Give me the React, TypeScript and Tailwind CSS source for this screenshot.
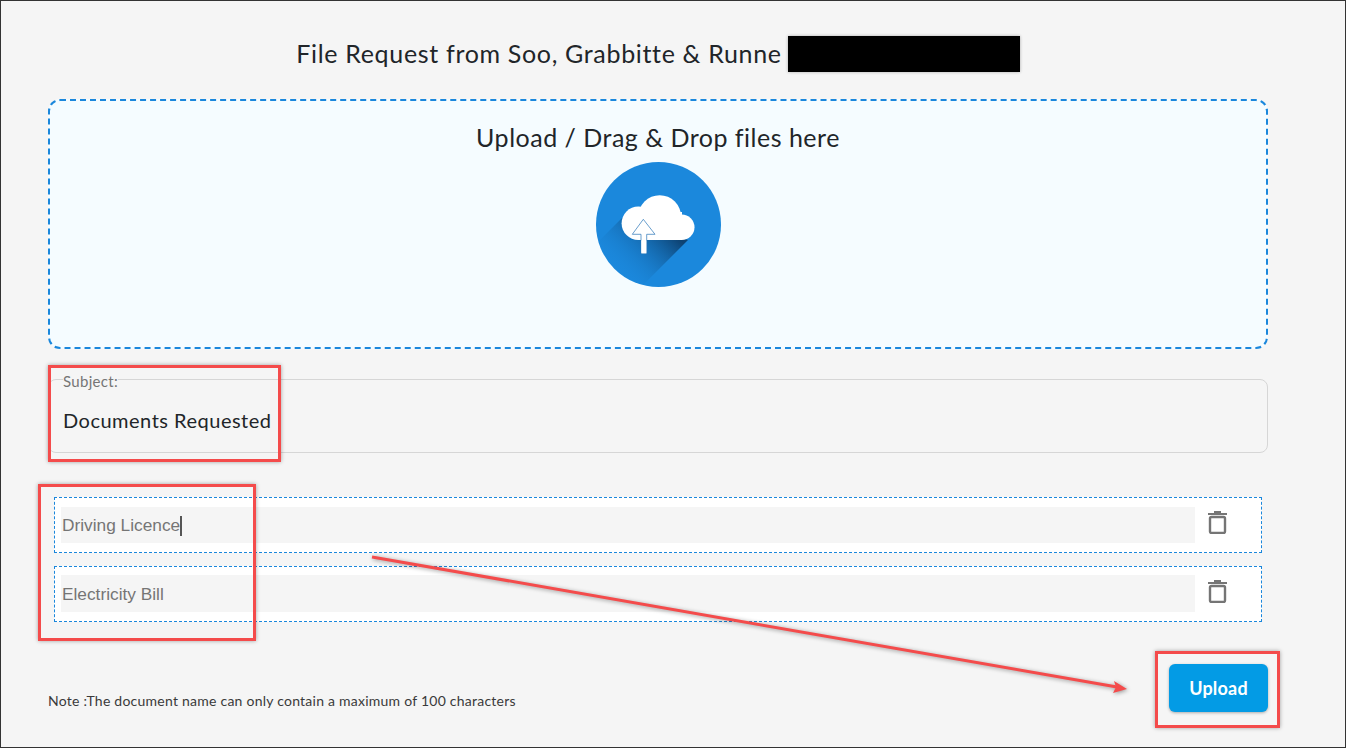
const sans = 'font-["Lato","Noto_Sans",sans-serif]';

function CloudIcon() {
  return (
    <svg width="125" height="125" viewBox="0 0 125 125" className="block">
      <defs>
        <clipPath id="disc">
          <circle cx="62.5" cy="62.5" r="62.5" />
        </clipPath>
        <linearGradient id="fall" gradientUnits="userSpaceOnUse" x1="78" y1="72" x2="30" y2="120">
          <stop offset="0" stopColor="#0d4272" />
          <stop offset="1" stopColor="#1a87dc" stopOpacity="0" />
        </linearGradient>
      </defs>
      <circle cx="62.5" cy="62.5" r="62.5" fill="#1b88dc" />
      <g clipPath="url(#disc)">
        <polygon points="26,56 92,78 40,130 -20,102" fill="url(#fall)" />
      </g>
      <g fill="#fff">
        <circle cx="42.3" cy="61.3" r="16.7" />
        <circle cx="63.7" cy="54.6" r="21.4" />
        <circle cx="85.7" cy="65.2" r="12.8" />
        <rect x="42" y="50" width="44" height="28" />
      </g>
      <path
        d="M47.3 57.3 L36.3 72.3 L45 72.3 L45 91.3 L50.7 91.3 L50.7 72.3 L59 72.3 Z"
        fill="#fff"
        stroke="#2a76b8"
        strokeWidth="0.7"
      />
      <rect x="45.4" y="78.4" width="4.9" height="13" fill="#fff" />
    </svg>
  );
}

function TrashIcon() {
  return (
    <svg width="19" height="23" viewBox="0 0 19 23" className="block">
      <rect x="6" y="0" width="7" height="2" fill="#757575" />
      <rect x="0" y="2" width="19" height="2" fill="#757575" />
      <rect x="2" y="6" width="15" height="16" rx="1.5" fill="none" stroke="#757575" strokeWidth="2.4" />
    </svg>
  );
}

function DocRow({ name, caret, inputClass }: { name: string; caret?: boolean; inputClass: string }) {
  return (
    <div className="flex h-[56px] items-center border border-dashed border-[#1a87dc] bg-white pl-[6px]">
      <div className={`flex w-[1134px] items-center bg-[#f5f5f5] pl-px font-["Liberation_Sans",sans-serif] text-[17.3px] text-[#757575] ${inputClass}`}>
        {name}
        {caret && <span className="h-[20px] w-[1.5px] bg-[#555]" />}
      </div>
      <div className="ml-[13px] -mt-[5px]">
        <TrashIcon />
      </div>
    </div>
  );
}

export default function App() {
  return (
    <div className={`relative h-[748px] w-[1346px] overflow-hidden border border-[#333] bg-[#f5f5f5] ${sans} text-[#212529]`}>
      <div className="px-[47px]">
        {/* header */}
        <div className="flex h-[98px] w-[1220px] items-start justify-center gap-[6px] pt-[35px]">
          <h1 className="-mt-px text-[25px] leading-[36px] font-normal tracking-[0.67px]">File Request from Soo, Grabbitte &amp; Runne</h1>
          <div className="h-[36px] w-[232px] bg-black shadow-[0_0_3px_rgba(0,0,0,0.3)]" />
        </div>

        {/* drop zone */}
        <div className="flex h-[250px] w-[1220px] flex-col items-center rounded-[12px] border-2 border-dashed border-[#1a87dc] bg-[#f5fcff] pt-[18px]">
          <div className="text-[25px] leading-[36px] tracking-[0.5px]">Upload / Drag &amp; Drop files here</div>
          <div className="mt-[7px]">
            <CloudIcon />
          </div>
        </div>

        {/* subject */}
        <fieldset className="mt-[21px] h-[83px] w-[1220px] rounded-[8px] border border-[#d6d6d6] pl-[14px]">
          <legend className="pt-[4px] text-[15px] leading-[14px] tracking-[0.3px] text-[#757575]">Subject:</legend>
          <div className="mt-[17px] text-[20px] leading-[30px] tracking-[0.5px]">Documents Requested</div>
        </fieldset>

        {/* documents */}
        <div className="mt-[44px] ml-[6px] flex w-[1208px] flex-col gap-[13px]">
          <DocRow name="Driving Licence" caret inputClass="h-[36px] pt-[2px]" />
          <DocRow name="Electricity Bill" inputClass="mb-px h-[37px] pt-[2px]" />
        </div>

        {/* footer */}
        <div className="mt-[42px] flex w-[1220px] items-start justify-between">
          <p className="mt-[28px] text-[14px] leading-[18px] tracking-[0.24px] text-[#3a3a3a]">
            Note :The document name can only contain a maximum of 100 characters
          </p>
          <button className="h-[48px] w-[99px] rounded-[6px] bg-[#039be5] text-[18px] font-bold tracking-[0.2px] text-white shadow-[0_1px_3px_rgba(0,0,0,0.3)]">
            Upload
          </button>
        </div>
      </div>

      {/* red annotations over the screenshot */}
      <div className="absolute left-[47px] top-[364px] h-[97px] w-[233px] border-[3px] border-[#f44b4b] shadow-[0_0_4px_rgba(0,0,0,0.35)]" />
      <div className="absolute left-[37px] top-[483px] h-[157px] w-[218px] border-[3px] border-[#f44b4b] shadow-[0_0_4px_rgba(0,0,0,0.35)]" />
      <div className="absolute left-[1154px] top-[650px] h-[77px] w-[125px] border-[3px] border-[#f44b4b] shadow-[0_0_4px_rgba(0,0,0,0.35)]" />
      <svg className="absolute left-0 top-0 drop-shadow-[1px_1px_2px_rgba(0,0,0,0.4)]" width="1346" height="748">
        <line x1="371" y1="556" x2="1116" y2="686" stroke="#f44b4b" strokeWidth="3" />
        <polygon points="1126,688 1113,680 1115,686 1112,692" fill="#f44b4b" />
      </svg>
    </div>
  );
}
